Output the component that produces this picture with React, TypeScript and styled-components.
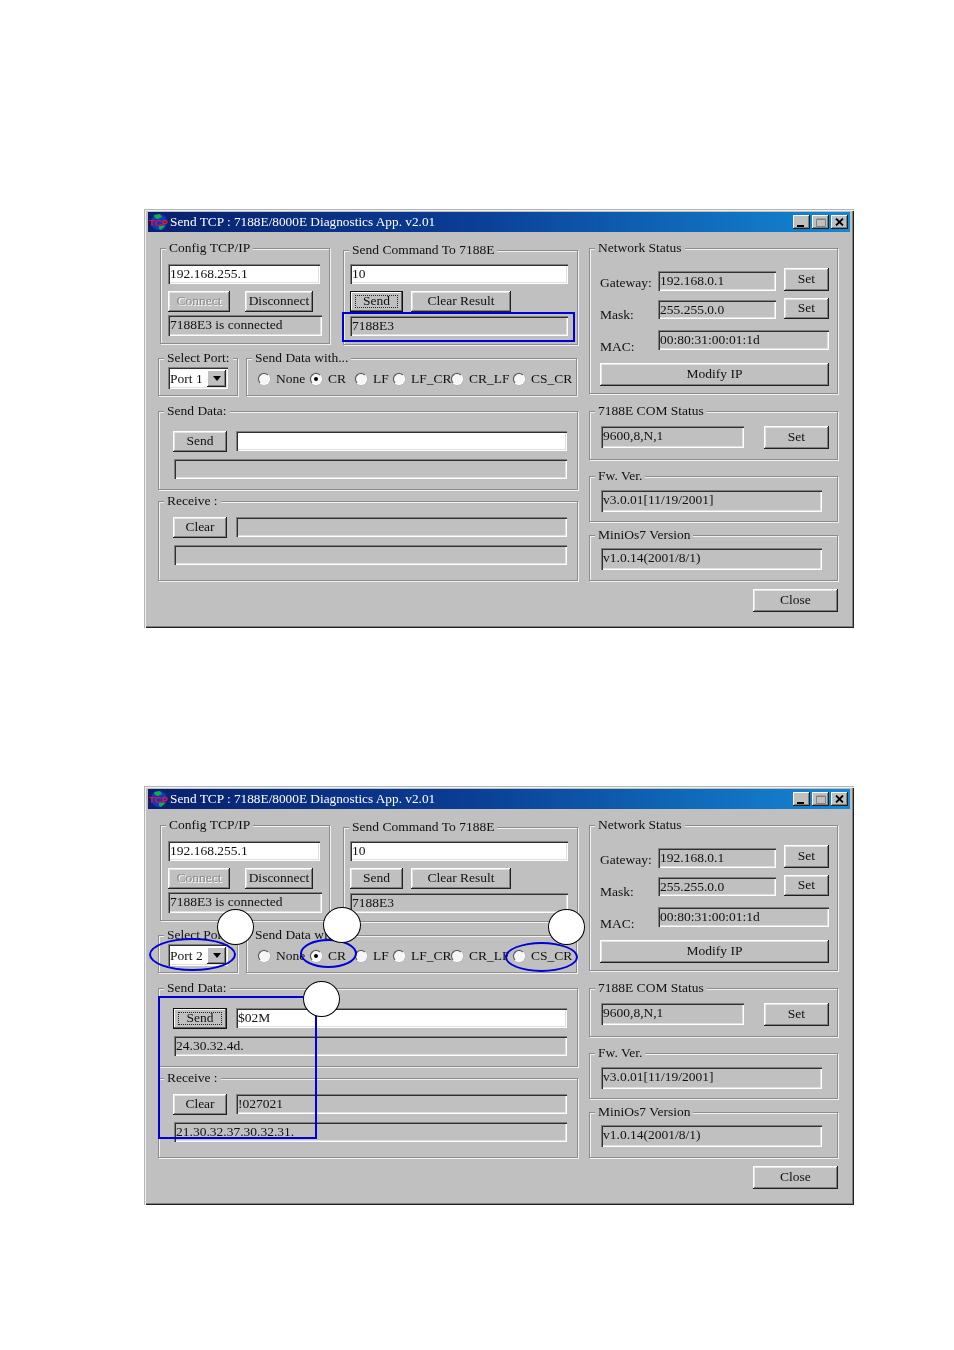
import styled, { createGlobalStyle } from "styled-components";

const GlobalStyle = createGlobalStyle`
  html, body {
    margin: 0;
    padding: 0;
    background: #fff;
  }
`;

const Page = styled.div`
  width: 954px;
  height: 1350px;
  padding: 209px 0 0 144px;
  box-sizing: border-box;
  display: flex;
  flex-direction: column;
  gap: 158px;
`;

const Window = styled.div`
  position: relative;
  width: 710px;
  height: 419px;
  box-sizing: border-box;
  padding: 3px 4px 0;
  background: #c0c0c0;
  box-shadow: inset 1px 1px 0 #b4b4b4, inset 2px 2px 0 #f0f0f0, inset -1px -1px 0 #202020, inset -2px -2px 0 #808080;
  font-family: "Liberation Serif", "Times New Roman", serif;
  font-size: 13.5px;
  color: #111;
  filter: blur(0.3px);
`;

const TitleBar = styled.div`
  height: 20px;
  display: flex;
  align-items: center;
  padding: 0 2px 0 1px;
  background: linear-gradient(90deg, #08206e 0%, #0a3d94 45%, #1488d4 100%);
  color: #fff;
  font-size: 13.3px;
  white-space: nowrap;
`;

const TitleText = styled.span`
  margin-left: 1px;
  flex: 1;
`;

const WinButton = styled.div`
  width: 17px;
  height: 14px;
  margin-left: 2px;
  display: flex;
  align-items: center;
  justify-content: center;
  background: #c0c0c0;
  box-shadow: inset -1px -1px 0 #202020, inset 1px 1px 0 #fff, inset -2px -2px 0 #808080;
`;

const Body = styled.div`
  display: flex;
  gap: 11px;
  padding: 16px 0 0 10px;
`;

const Column = styled.div`
  display: flex;
  flex-direction: column;
`;

const Row = styled.div<{ $mt?: number }>`
  display: flex;
  align-items: flex-start;
  margin-top: ${(p) => p.$mt ?? 0}px;
`;

const BaselineRow = styled(Row)`
  align-items: flex-end;
`;

const Group = styled.div<{ $w: number; $h: number; $mt?: number; $ml?: number; $pt: number; $pl: number }>`
  position: relative;
  flex: none;
  box-sizing: border-box;
  width: ${(p) => p.$w}px;
  height: ${(p) => p.$h}px;
  margin-top: ${(p) => p.$mt ?? 0}px;
  margin-left: ${(p) => p.$ml ?? 0}px;
  padding: ${(p) => p.$pt}px 0 0 ${(p) => p.$pl}px;
  border: 1px solid #8c8c8c;
  box-shadow: inset 1px 1px 0 #f2f2f2, 1px 1px 0 #f2f2f2;
`;

const Legend = styled.span`
  position: absolute;
  top: -10px;
  left: 5px;
  padding: 0 3px;
  line-height: 17px;
  background: #c0c0c0;
  white-space: nowrap;
`;

const Field = styled.div<{ $w: number; $h?: number; $white?: boolean; $mt?: number; $ml?: number }>`
  flex: none;
  box-sizing: border-box;
  width: ${(p) => p.$w}px;
  height: ${(p) => p.$h ?? 20}px;
  margin-top: ${(p) => p.$mt ?? 0}px;
  margin-left: ${(p) => p.$ml ?? 0}px;
  padding-left: 2px;
  line-height: 19px;
  white-space: nowrap;
  background: ${(p) => (p.$white ? "#fff" : "#c0c0c0")};
  box-shadow: inset 1px 1px 0 #808080, inset 2px 2px 0 #303030, inset -1px -1px 0 #fff, inset -2px -2px 0 #dfdfdf;
`;

const Button = styled.div<{ $w: number; $h?: number; $ml?: number; $mt?: number; $focus?: boolean; $off?: boolean }>`
  position: relative;
  flex: none;
  box-sizing: border-box;
  width: ${(p) => p.$w}px;
  height: ${(p) => p.$h ?? 21}px;
  margin-left: ${(p) => p.$ml ?? 0}px;
  margin-top: ${(p) => p.$mt ?? 0}px;
  display: flex;
  align-items: center;
  justify-content: center;
  padding-bottom: 2px;
  background: #c0c0c0;
  color: ${(p) => (p.$off ? "#8a8a8a" : "#111")};
  text-shadow: ${(p) => (p.$off ? "1px 1px 0 #fff" : "none")};
  white-space: nowrap;
  box-shadow: ${(p) =>
    p.$focus
      ? "inset 0 0 0 1px #101010, inset -2px -2px 0 #606060, inset 2px 2px 0 #fff"
      : "inset -1px -1px 0 #202020, inset 1px 1px 0 #fff, inset -2px -2px 0 #808080, inset 2px 2px 0 #e4e4e4"};

  ${(p) =>
    p.$focus &&
    `&::after {
      content: "";
      position: absolute;
      inset: 4px 5px;
      border: 1px dotted #222;
    }`}
`;

const Combo = styled(Field)`
  display: flex;
  align-items: center;
  justify-content: space-between;
  padding-right: 2px;
`;

const ComboArrow = styled.div`
  width: 19px;
  height: 17px;
  display: flex;
  align-items: center;
  justify-content: center;
  background: #c0c0c0;
  box-shadow: inset -1px -1px 0 #202020, inset 1px 1px 0 #fff, inset -2px -2px 0 #808080;

  &::before {
    content: "";
    border-style: solid;
    border-width: 5px 4px 0;
    border-color: #000 transparent transparent;
  }
`;

const RadioItem = styled.div<{ $w: number }>`
  flex: none;
  width: ${(p) => p.$w}px;
  display: flex;
  align-items: center;
  gap: 6px;
  line-height: 18px;
  white-space: nowrap;
`;

const RadioDot = styled.span<{ $on?: boolean }>`
  flex: none;
  width: 12px;
  height: 12px;
  box-sizing: border-box;
  border-radius: 50%;
  display: flex;
  align-items: center;
  justify-content: center;
  background: #f6f6f6;
  border: 1px solid;
  border-color: #505050 #fff #fff #505050;
  box-shadow: 0 0 0 0.5px #b0b0b0;

  &::before {
    content: "";
    width: 4px;
    height: 4px;
    border-radius: 50%;
    background: ${(p) => (p.$on ? "#000" : "transparent")};
  }
`;

const StatusLabel = styled.span<{ $w: number; $drop?: number }>`
  flex: none;
  width: ${(p) => p.$w}px;
  line-height: 18px;
  margin-bottom: ${(p) => -(p.$drop ?? 0)}px;
`;

const CloseRow = styled.div`
  display: flex;
  justify-content: flex-end;
  margin-top: 8px;
`;

// annotations drawn over the dialog
const Marker = styled.div<{ $x: number; $y: number; $w: number; $h: number }>`
  position: absolute;
  left: ${(p) => p.$x}px;
  top: ${(p) => p.$y}px;
  width: ${(p) => p.$w}px;
  height: ${(p) => p.$h}px;
  box-sizing: border-box;
`;

const BlueBox = styled(Marker)`
  border: 2px solid #0000d8;
`;

const BlueOval = styled(Marker)`
  border: 2px solid #0000d8;
  border-radius: 50%;
`;

const StepCircle = styled(Marker)`
  border: 1.5px solid #000;
  border-radius: 50%;
  background: #fff;
`;

const TcpIcon = () => (
  <svg width="20" height="18" viewBox="0 0 20 18">
    <circle cx="10" cy="9" r="8" fill="#1434c8" />
    <path d="M5 2 L11 1 L13 4 L9 6 L6 5 Z M10 13 L15 12 L16 13 L12 17 L10 16 Z" fill="#10b040" />
    <text x="0" y="12.5" fontFamily="Liberation Sans, sans-serif" fontWeight="700" fontSize="9.5" fill="#ff1010">
      TCP
    </text>
  </svg>
);

const MinGlyph = () => (
  <svg width="9" height="9" viewBox="0 0 9 9">
    <rect x="0" y="7" width="7" height="2" fill="#000" />
  </svg>
);

const MaxGlyph = () => (
  <svg width="10" height="9" viewBox="0 0 10 9">
    <path d="M0.5 1.5 H9.5 V8.5 H0.5 Z M0.5 1 H9.5" fill="none" stroke="#808080" />
  </svg>
);

const CloseGlyph = () => (
  <svg width="9" height="8" viewBox="0 0 9 8">
    <path d="M1 0.5 L8 7.5 M8 0.5 L1 7.5" stroke="#000" strokeWidth="1.8" />
  </svg>
);

const radios = [
  { label: "None", w: 52 },
  { label: "CR", w: 45, on: true },
  { label: "LF", w: 38 },
  { label: "LF_CR", w: 58 },
  { label: "CR_LF", w: 62 },
  { label: "CS_CR", w: 60 },
];

type DialogProps = {
  port: string;
  commandFocus?: boolean;
  dataFocus?: boolean;
  sendData?: string;
  sendHex?: string;
  receive?: string;
  receiveHex?: string;
  children?: React.ReactNode;
};

const DiagnosticsDialog = ({
  port,
  commandFocus,
  dataFocus,
  sendData,
  sendHex,
  receive,
  receiveHex,
  children,
}: DialogProps) => (
  <Window>
    <TitleBar>
      <TcpIcon />
      <TitleText>Send TCP : 7188E/8000E Diagnostics App. v2.01</TitleText>
      <WinButton>
        <MinGlyph />
      </WinButton>
      <WinButton>
        <MaxGlyph />
      </WinButton>
      <WinButton>
        <CloseGlyph />
      </WinButton>
    </TitleBar>
    <Body>
      <Column>
        <Row>
          <Group $w={170} $h={96} $ml={2} $pt={15} $pl={7}>
            <Legend>Config TCP/IP</Legend>
            <Field $w={152} $white>
              192.168.255.1
            </Field>
            <Row $mt={7}>
              <Button $w={62} $off>
                Connect
              </Button>
              <Button $w={68} $ml={15}>
                Disconnect
              </Button>
            </Row>
            <Field $w={154} $h={21} $mt={3}>
              7188E3 is connected
            </Field>
          </Group>
          <Group $w={235} $h={95} $ml={13} $mt={2} $pt={13} $pl={6}>
            <Legend>Send Command To 7188E</Legend>
            <Field $w={218} $white>
              10
            </Field>
            <Row $mt={7}>
              <Button $w={53} $focus={commandFocus}>
                Send
              </Button>
              <Button $w={100} $ml={8}>
                Clear Result
              </Button>
            </Row>
            <Field $w={218} $mt={4}>
              7188E3
            </Field>
          </Group>
        </Row>
        <Row $mt={13}>
          <Group $w={80} $h={38} $pt={8} $pl={9}>
            <Legend>Select Port:</Legend>
            <Combo $w={60} $h={22} $white>
              {port}
              <ComboArrow />
            </Combo>
          </Group>
          <Group $w={331} $h={38} $ml={8} $pt={11} $pl={11}>
            <Legend>Send Data with...</Legend>
            <Row>
              {radios.map((r) => (
                <RadioItem key={r.label} $w={r.w}>
                  <RadioDot $on={r.on} />
                  {r.label}
                </RadioItem>
              ))}
            </Row>
          </Group>
        </Row>
        <Group $w={420} $h={79} $mt={15} $pt={19} $pl={14}>
          <Legend>Send Data:</Legend>
          <Row>
            <Button $w={54} $focus={dataFocus}>
              Send
            </Button>
            <Field $w={331} $ml={9} $white>
              {sendData}
            </Field>
          </Row>
          <Field $w={393} $ml={1} $mt={7}>
            {sendHex}
          </Field>
        </Group>
        <Group $w={420} $h={80} $mt={11} $pt={15} $pl={14}>
          <Legend>Receive :</Legend>
          <Row>
            <Button $w={54}>Clear</Button>
            <Field $w={331} $ml={9}>
              {receive}
            </Field>
          </Row>
          <Field $w={393} $ml={1} $mt={7}>
            {receiveHex}
          </Field>
        </Group>
      </Column>
      <Column>
        <Group $w={249} $h={146} $pt={19} $pl={10}>
          <Legend>Network Status</Legend>
          <BaselineRow>
            <StatusLabel $w={58} $drop={1}>
              Gateway:
            </StatusLabel>
            <Field $w={118}>192.168.0.1</Field>
            <Button $w={45} $h={23} $ml={8}>
              Set
            </Button>
          </BaselineRow>
          <BaselineRow $mt={7}>
            <StatusLabel $w={58} $drop={5}>
              Mask:
            </StatusLabel>
            <Field $w={118} $h={19}>
              255.255.0.0
            </Field>
            <Button $w={45} $h={21} $ml={8}>
              Set
            </Button>
          </BaselineRow>
          <BaselineRow $mt={11}>
            <StatusLabel $w={58} $drop={6}>
              MAC:
            </StatusLabel>
            <Field $w={171}>00:80:31:00:01:1d</Field>
          </BaselineRow>
          <Button $w={229} $h={23} $mt={13}>
            Modify IP
          </Button>
        </Group>
        <Group $w={249} $h={49} $mt={17} $pt={14} $pl={11}>
          <Legend>7188E COM Status</Legend>
          <Row>
            <Field $w={143} $h={22}>
              9600,8,N,1
            </Field>
            <Button $w={65} $h={23} $ml={20}>
              Set
            </Button>
          </Row>
        </Group>
        <Group $w={249} $h={46} $mt={16} $pt={13} $pl={11}>
          <Legend>Fw. Ver.</Legend>
          <Field $w={221} $h={22}>
            v3.0.01[11/19/2001]
          </Field>
        </Group>
        <Group $w={249} $h={46} $mt={13} $pt={12} $pl={11}>
          <Legend>MiniOs7 Version</Legend>
          <Field $w={221} $h={22}>
            v1.0.14(2001/8/1)
          </Field>
        </Group>
        <CloseRow>
          <Button $w={85} $h={23}>
            Close
          </Button>
        </CloseRow>
      </Column>
    </Body>
    {children}
  </Window>
);

export default function App() {
  return (
    <Page>
      <GlobalStyle />
      <DiagnosticsDialog port="Port 1" commandFocus>
        <BlueBox $x={198} $y={103} $w={233} $h={30} />
      </DiagnosticsDialog>
      <DiagnosticsDialog
        port="Port 2"
        dataFocus
        sendData="$02M"
        sendHex="24.30.32.4d."
        receive="!027021"
        receiveHex="21.30.32.37.30.32.31."
      >
        <BlueOval $x={5} $y={152} $w={87} $h={33} />
        <BlueOval $x={156} $y={153} $w={57} $h={29} />
        <BlueOval $x={361} $y={156} $w={73} $h={30} />
        <BlueBox $x={14} $y={210} $w={159} $h={143} />
        <StepCircle $x={73} $y={123} $w={37} $h={36} />
        <StepCircle $x={179} $y={121} $w={38} $h={36} />
        <StepCircle $x={404} $y={123} $w={37} $h={36} />
        <StepCircle $x={159} $y={195} $w={37} $h={36} />
      </DiagnosticsDialog>
    </Page>
  );
}
